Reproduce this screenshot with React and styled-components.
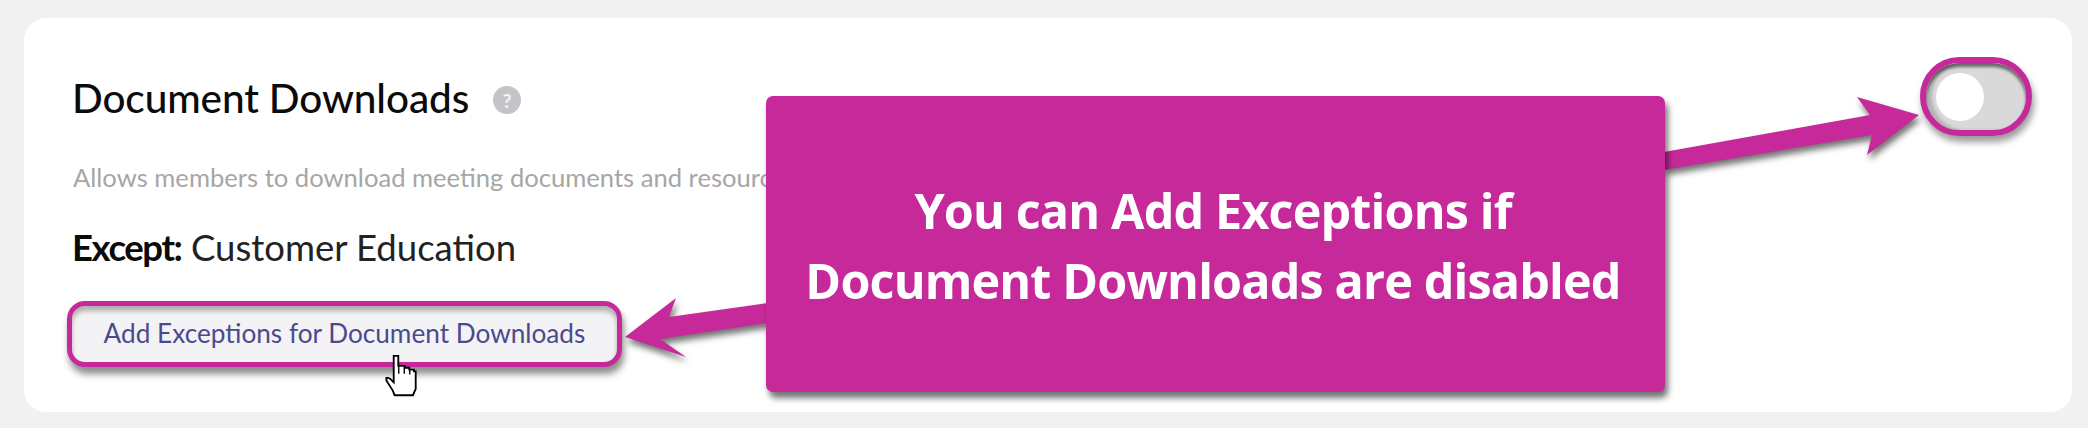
import React from "react";
import styled, { createGlobalStyle } from "styled-components";

const GlobalStyle = createGlobalStyle`
  html, body {
    margin: 0;
    padding: 0;
    background: #f1f1f1;
  }
  body {
    font-family: Lato, "Liberation Sans", sans-serif;
    overflow: hidden;
  }
`;

const Page = styled.div`
  position: relative;
  width: 2088px;
  height: 428px;
  box-sizing: border-box;
  padding: 18px 16px 16px 24px;
`;

const Card = styled.section`
  height: 394px;
  box-sizing: border-box;
  background: #fff;
  border-radius: 22px;
  padding: 39px 40px 0 43px;
  display: flex;
  justify-content: space-between;
  align-items: flex-start;
`;

const Details = styled.div`
  display: flex;
  flex-direction: column;
  align-items: flex-start;
`;

const TitleRow = styled.div`
  display: flex;
  align-items: center;
  gap: 24px;
  height: 80px;
  margin-left: 5px;
`;

const Title = styled.h2`
  margin: 0;
  font-size: 40.5px;
  font-weight: 500;
  letter-spacing: -0.1px;
  color: #0b0b0b;
`;

const HelpBadge = styled.span`
  width: 28px;
  height: 28px;
  margin-top: 6px;
  border-radius: 50%;
  background: #c4c4c8;
  color: #f4f4f4;
  font-size: 19px;
  font-weight: 700;
  display: flex;
  align-items: center;
  justify-content: center;
`;

const Description = styled.p`
  margin: 22px 0 0 6px;
  font-size: 25.6px;
  line-height: 36px;
  color: #a6a6a6;
  white-space: nowrap;
`;

const ExceptLine = styled.p`
  margin: 30px 0 0 5px;
  font-size: 36.5px;
  line-height: 44px;
  color: #222;
  strong {
    font-weight: 700;
    color: #0b0b0b;
    letter-spacing: -1.4px;
  }
`;

const ExceptionButton = styled.button`
  margin-top: 32px;
  width: 555px;
  height: 66px;
  box-sizing: border-box;
  padding: 0 0 3px;
  background: #f3f3f5;
  border: 5px solid #c62a9a;
  border-radius: 18px;
  box-shadow: 2px 7px 7px rgba(0, 0, 0, 0.45), inset 0 5px 5px rgba(0, 0, 0, 0.28);
  font-family: inherit;
  font-size: 26.2px;
  color: #4b4a8e;
`;

const Toggle = styled.div`
  width: 112px;
  height: 79px;
  box-sizing: border-box;
  border: 6px solid #c62a9a;
  border-radius: 40px;
  background: #d9d9d9;
  box-shadow: 2px 6px 7px rgba(0, 0, 0, 0.4), inset 0 4px 3px rgba(0, 0, 0, 0.5), inset 6px 0 3px rgba(0, 0, 0, 0.16);
  display: flex;
  align-items: center;
  padding-left: 10px;
`;

const Knob = styled.span`
  width: 48px;
  height: 48px;
  border-radius: 50%;
  background: #fff;
`;

const ArrowLayer = styled.svg`
  position: absolute;
  left: 0;
  top: 0;
  filter: drop-shadow(2px 5px 3px rgba(0, 0, 0, 0.55));
`;

const Callout = styled.div`
  position: absolute;
  left: 766px;
  top: 96px;
  width: 899px;
  height: 296px;
  box-sizing: border-box;
  padding: 79px 5px 0 0;
  background: #c62a9a;
  border-radius: 7px;
  box-shadow: 3px 6px 6px rgba(0, 0, 0, 0.55);
  color: #fff;
  font-family: "Open Sans", "Noto Sans", sans-serif;
  font-size: 48.5px;
  font-weight: 700;
  letter-spacing: -0.85px;
  line-height: 70px;
  text-align: center;
`;

const Pointer = styled.svg`
  position: absolute;
  left: 385px;
  top: 353px;
`;

// hand cursor, traced from the screenshot
const HandCursor = () => (
  <Pointer width="33" height="45" viewBox="0 0 36 46">
    <path
      d="M9.5 1.5h5v11h7v2h5v2h5v2h2v19l-3 7h-20l-2-5-7-11v-3h2l2 1 4 4V2z"
      fill="#fff"
      stroke="#000"
      strokeWidth="2"
      strokeLinejoin="miter"
    />
    <path d="M15 13v8M21 14v7M27 17v5" stroke="#000" strokeWidth="1.5" fill="none" />
  </Pointer>
);

export default function App() {
  return (
    <Page>
      <GlobalStyle />
      <Card>
        <Details>
          <TitleRow>
            <Title>Document Downloads</Title>
            <HelpBadge>?</HelpBadge>
          </TitleRow>
          <Description>Allows members to download meeting documents and resources</Description>
          <ExceptLine>
            <strong>Except:</strong> Customer Education
          </ExceptLine>
          <ExceptionButton>Add Exceptions for Document Downloads</ExceptionButton>
        </Details>
        <Toggle>
          <Knob />
        </Toggle>
      </Card>
      <ArrowLayer width="2088" height="428" viewBox="0 0 2088 428">
        <polygon points="625,337 676,298 669,317 768,303 768,323 660,339 686,357" fill="#c62a9a" />
        <polygon points="1664,152 1870,115 1857,97 1919,115 1867,155 1872,135 1664,170" fill="#c62a9a" />
      </ArrowLayer>
      <Callout>
        You can Add Exceptions if
        <br />
        Document Downloads are disabled
      </Callout>
      <HandCursor />
    </Page>
  );
}
